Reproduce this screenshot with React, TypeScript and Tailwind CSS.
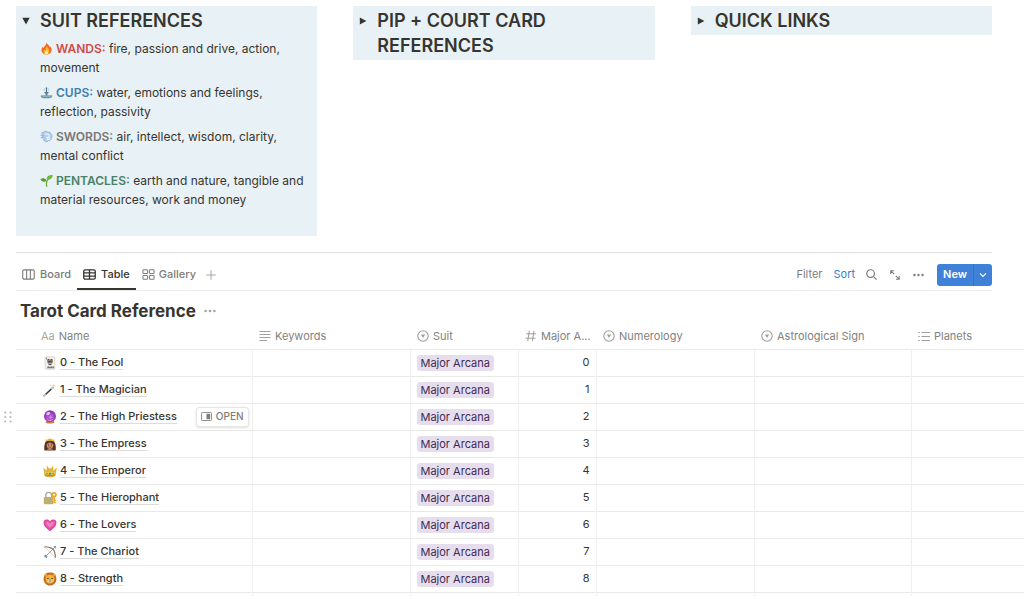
import type { ReactNode } from "react";

type IconProps = { className?: string };

const Fire = () => (
  <svg viewBox="0 0 16 16" className="size-full" aria-hidden="true">
    <path d="M8.2.6c.5 2.2 3.6 4 4.3 6.4.2-.5.3-1.2.1-2 1.5 1.8 2 3.900 1.600 5.900C13.600 13.800 11.200 15.600 8 15.600S2.300 13.700 1.900 10.900c-.3-2.200.5-4.200 1.900-5.500 0 .9.200 1.600.7 2.200C5 4.800 8 3.800 8.200.6z" fill="#f4651f" />
    <path d="M8.300 4.500c.2 1.900 3.300 3.500 3.300 7 0 2.200-1.500 4-3.600 4s-3.700-1.500-3.700-3.700c0-1.300.5-2.300 1.200-3 .1.800.5 1.300 1 1.500C6.300 8 8.200 6.700 8.300 4.500z" fill="#fdb42c" />
    <path d="M8.200 9.500c.3 1.200 1.700 2 1.700 3.700 0 1.300-.8 2.300-1.900 2.300s-2-.9-2-2.100c0-1.600 1.900-2.300 2.200-3.900z" fill="#fff0a0" />
  </svg>
);

const Fountain = () => (
  <svg viewBox="0 0 16 16" className="size-full" aria-hidden="true">
    <path d="M8 1v7M8 2.500C6.500 1.500 5.200 3.500 5 6M8 2.500c1.500-1 2.800 1 3 3.500" fill="none" stroke="#9ccbe4" strokeWidth="1" />
    <path d="M5.300 7.500h5.400c0 1.300-1 1.900-1.900 2.100l.3 2.900H6.900l.3-2.900c-.9-.2-1.900-.8-1.900-2.100z" fill="#5d7a86" />
    <path d="M.8 12h14.400c0 1.800-1.600 3-3.600 3H4.400c-2 0-3.600-1.200-3.600-3z" fill="#78909b" />
    <ellipse cx="8" cy="12" rx="7.200" ry="1.200" fill="#8fbdd0" />
    <path d="M7.300 2h1.400v10H7.300z" fill="#587480" />
  </svg>
);

const Wind = () => (
  <svg viewBox="0 0 16 16" className="size-full" aria-hidden="true">
    <path d="M5 2.500c2-1.500 4-.8 4.600.3 2-.8 4.100.5 4 2.500 1.600 1 1.800 3.200.5 4.500 0 2.200-1.800 3.500-3.600 3.200-1.300 1.800-4 2-5.200.5-1.300-1-1.100-2.800.2-3.500L1 9.500l3-.9L.8 6.200l3.800.6L2 3.500z" fill="#b3cfec" stroke="#84add8" strokeWidth=".9" />
    <path d="M6.500 5.500c2-1.500 4.800-.5 4.800 1.700S8.500 10.500 7.500 9m1 2.500c1.500.7 3.500-.2 3.700-2" fill="none" stroke="#f1f7fd" strokeWidth="1.300" />
  </svg>
);

const Seedling = () => (
  <svg viewBox="0 0 16 16" className="size-full" aria-hidden="true">
    <path d="M8.300 15.200C7.300 11 7.900 8.200 10.300 6" fill="none" stroke="#62a832" strokeWidth="1.400" strokeLinecap="round" />
    <path d="M8.200 5.500c.3-3.300 3.700-4.500 7.500-4.300-.2 4-3.600 6.600-7.100 5.800z" fill="#61b52e" />
    <path d="M.4 6.500c2.700-2 6.200-1.400 7.600 1.700-2.500 2.300-5.600 1.500-7.600-1.700z" fill="#4c9d27" />
    <path d="M9 6c2-.7 3.700-2 5.500-4" stroke="#9bdb58" strokeWidth=".8" fill="none" />
  </svg>
);

const Joker = () => (
  <svg viewBox="0 0 16 16" className="size-full" aria-hidden="true">
    <rect x="2.500" y=".8" width="11" height="14.400" rx="1" fill="#f4f1ea" stroke="#cbc7bf" strokeWidth=".7" />
    <path d="M4.500 5.500l1.200-2.300L8 4.200l2.300-1 1.200 2.300z" fill="#444" />
    <path d="M5.500 5.500h5V9L8 11 5.500 9z" fill="#b9a899" />
    <path d="M5 6h6v1.500H5zM6.500 9h3v1h-3z" fill="#393636" />
    <path d="M4.500 14l1-2.500L8 12.500l2.500-1 1 2.500z" fill="#777" />
    <path d="M3.600 2h.9v2h-.9zM11.600 12h.9v2h-.9z" fill="#555" />
  </svg>
);

const Wand = () => (
  <svg viewBox="0 0 16 16" className="size-full" aria-hidden="true">
    <path d="M1.300 14.700L11.500 5" stroke="#36393b" strokeWidth="1.600" strokeLinecap="round" />
    <path d="M9.800 6.600L11.700 4.800M1.300 14.700l1.500-1.400" stroke="#c9c9c9" strokeWidth="1.700" strokeLinecap="round" />
    <path d="M12.500.8l.5 1.900 1.900.5-1.900.5-.5 1.900-.5-1.900-1.900-.5 1.900-.5zM8.500 1.500l.3 1 1 .3-1 .3-.3 1-.3-1-1-.3 1-.3zM14.500 7l.2.8.8.2-.8.2-.2.8-.2-.8-.8-.2.8-.2z" fill="#f4cf77" />
  </svg>
);

const CrystalBall = () => (
  <svg viewBox="0 0 16 16" className="size-full" aria-hidden="true">
    <path d="M4.200 11.500h7.600l1.200 3c-2 1.300-8 1.300-10 0z" fill="#cf7c3d" />
    <circle cx="8" cy="7" r="6.800" fill="#8a3cae" />
    <circle cx="8" cy="8" r="5" fill="#ae50cf" />
    <path d="M4 10c2 2 6 2 8-.5-1 3.500-6.500 4.200-8 .5z" fill="#e290ee" />
    <ellipse cx="6" cy="4" rx="2.300" ry="1.500" fill="#e7c8f4" transform="rotate(-30 6 4)" />
    <path d="M8.500 5.500l1 2 2 .8-2 .7-1 2-.8-2-2-.7 2-.8z" fill="#d083e3" />
  </svg>
);

const Princess = () => (
  <svg viewBox="0 0 16 16" className="size-full" aria-hidden="true">
    <path d="M1.500 15C.8 8 3 2.500 8 2.500S15.200 8 14.500 15c-2 .6-11 .6-13 0z" fill="#573423" />
    <path d="M3.200 5.200L3 2.500l2.700 1L8 1.200l2.300 2.300 2.700-1-.2 2.700C10 3.900 6 3.900 3.200 5.200z" fill="#efb93b" />
    <path d="M4.100 8c1.400-.3 2.900-1 3.700-2 .8 1 2.500 1.700 4.100 2 .1 3.600-1.400 5.800-3.900 5.800S4 11.600 4.100 8z" fill="#c98c68" />
    <circle cx="6.200" cy="9.200" r=".6" fill="#332119" />
    <circle cx="9.800" cy="9.200" r=".6" fill="#332119" />
    <path d="M6.500 11.300c1 .7 2 .7 3 0" stroke="#8d2f32" strokeWidth=".8" fill="none" />
    <path d="M4 15.200c.7-1.500 7.300-1.500 8 0z" fill="#d6869b" />
  </svg>
);

const Crown = () => (
  <svg viewBox="0 0 16 16" className="size-full" aria-hidden="true">
    <path d="M2.200 13.600L.8 5.200l3.400 3L5 2.600l2.200 4.500L8 4.500l.8 2.600L11 2.600l.8 5.600 3.400-3-1.400 8.400c-2.500 1.300-9 1.300-11.600 0z" fill="#e9b82d" stroke="#c48e19" strokeWidth=".5" />
    <path d="M2.300 10h11.400" stroke="#f8dd73" strokeWidth="1" />
    <path d="M2.500 12.500c3 1.200 8 1.200 11 0" stroke="#a87518" strokeWidth=".9" fill="none" />
    <circle cx="8" cy="11" r="1.300" fill="#3e8ac4" />
    <circle cx="4.500" cy="10.700" r=".9" fill="#55a351" />
    <circle cx="11.500" cy="10.700" r=".9" fill="#55a351" />
    <circle cx="5" cy="2.500" r=".9" fill="#f7d763" />
    <circle cx="11" cy="2.500" r=".9" fill="#f7d763" />
    <circle cx="1" cy="5" r=".8" fill="#f7d763" />
    <circle cx="15" cy="5" r=".8" fill="#f7d763" />
  </svg>
);

const LockKey = () => (
  <svg viewBox="0 0 16 16" className="size-full" aria-hidden="true">
    <path d="M3.200 8V4.800c0-4.200 6.600-4.200 6.600 0V8" fill="none" stroke="#a3a8a9" strokeWidth="1.500" />
    <rect x=".9" y="6.800" width="11" height="8.400" rx="1.200" fill="#c0ae70" />
    <circle cx="12.600" cy="4.200" r="2.100" fill="none" stroke="#eca628" strokeWidth="2" />
    <path d="M12.900 6.500V14" stroke="#eca628" strokeWidth="1.800" />
    <path d="M14.500 10v1.500M14.500 12.500V14" stroke="#eca628" strokeWidth="1.400" />
  </svg>
);

const Heart = () => (
  <svg viewBox="0 0 16 16" className="size-full" aria-hidden="true">
    <path d="M8 15C3.500 11.600.6 8.600.6 5.300.6 1.300 5.800.3 8 4c2.200-3.700 7.400-2.700 7.400 1.300C15.400 8.600 12.500 11.600 8 15z" fill="#e0429f" />
    <path d="M8 12.800C4.500 10.100 2.300 7.700 2.300 5.500 2.300 2.900 6.300 2.500 8 6c1.700-3.500 5.700-3.100 5.700-.5 0 2.200-2.200 4.600-5.700 7.300z" fill="#ec5cae" />
    <path d="M8 10.500C5.500 8.500 4 7 4 5.700 4 4 6.800 4.200 8 7.500c1.200-3.300 4-3.500 4-1.800 0 1.300-1.500 2.800-4 4.800z" fill="#f582c2" />
  </svg>
);

const Bow = () => (
  <svg viewBox="0 0 16 16" className="size-full" aria-hidden="true">
    <path d="M2 2.300c2.500-1 4 .4 6 .8 3 .8 4.800 2.500 5.300 5.400.3 1.700 1.300 3.400.7 5.500" fill="none" stroke="#9b7565" strokeWidth="1.400" strokeLinecap="round" />
    <path d="M2 2.300L14 14" stroke="#b9b5b2" strokeWidth=".6" />
    <path d="M2 14L13.500 2.500" stroke="#8e8c8b" strokeWidth="1" />
    <path d="M15 1l-.8 3.200-2.400-2.400z" fill="#7b8588" />
    <path d="M.7 12.800l2.600-2 .4 1.800 1.700.4-2 2.500-.7-1.900z" fill="#7792a1" />
  </svg>
);

const Lion = () => (
  <svg viewBox="0 0 16 16" className="size-full" aria-hidden="true">
    <path d="M8 .8c3-.5 6 1 6.600 3.700 1.300 3 .9 6.300-1 8.300-1.500 2-3.600 2.600-5.600 2.600s-4.100-.6-5.600-2.600c-1.900-2-2.300-5.300-1-8.300C2 1.800 5 .3 8 .8z" fill="#c76b1d" />
    <circle cx="3.300" cy="3.500" r="1.600" fill="#eba43a" />
    <circle cx="12.700" cy="3.500" r="1.600" fill="#eba43a" />
    <path d="M8 3c3 0 5 2 5 5 0 3.200-2 5.200-5 5.200S3 11.200 3 8c0-3 2-5 5-5z" fill="#f7b940" />
    <circle cx="5.600" cy="7.300" r=".8" fill="#40250f" />
    <circle cx="10.400" cy="7.300" r=".8" fill="#40250f" />
    <ellipse cx="8" cy="10.800" rx="2.800" ry="1.900" fill="#fbe7b5" />
    <path d="M6.900 8.800h2.200L8 10.200z" fill="#542d14" />
    <path d="M6.300 11.200c.7.600 1.400.4 1.700-.3.300.7 1 .9 1.700.3" stroke="#542d14" strokeWidth=".7" fill="none" />
  </svg>
);

const BoardIcon = () => (
  <svg viewBox="0 0 14 14" className="size-[13px]" fill="none" stroke="currentColor" strokeWidth="1.200" aria-hidden="true">
    <rect x=".8" y="2" width="12.400" height="10" rx="1.500" />
    <path d="M5 2v10M9 2v10" />
  </svg>
);

const TableIcon = () => (
  <svg viewBox="0 0 14 14" className="size-[13px]" fill="none" stroke="currentColor" strokeWidth="1.400" aria-hidden="true">
    <rect x=".8" y="2" width="12.400" height="10" rx="1.500" />
    <path d="M.8 5.300h12.400M.8 8.700h12.400M7 2v10" />
  </svg>
);

const GalleryIcon = () => (
  <svg viewBox="0 0 14 14" className="size-[13px]" fill="none" stroke="currentColor" strokeWidth="1.100" aria-hidden="true">
    <rect x="1" y="1.800" width="5" height="4.200" rx=".9" />
    <rect x="8" y="1.800" width="5" height="4.200" rx=".9" />
    <rect x="1" y="8" width="5" height="4.200" rx=".9" />
    <rect x="8" y="8" width="5" height="4.200" rx=".9" />
  </svg>
);

const PlusIcon = () => (
  <svg viewBox="0 0 10 10" className="size-[10px]" stroke="currentColor" aria-hidden="true">
    <path d="M5 .3v9.400M.3 5h9.400" />
  </svg>
);

const Dots = ({ className }: IconProps) => (
  <svg viewBox="0 0 12 4" className={className} fill="currentColor" aria-hidden="true">
    <circle cx="1.600" cy="2" r="1.300" />
    <circle cx="6" cy="2" r="1.300" />
    <circle cx="10.400" cy="2" r="1.300" />
  </svg>
);

const SearchIcon = () => (
  <svg viewBox="0 0 12 12" className="size-[11px]" fill="none" stroke="currentColor" strokeWidth="1.300" aria-hidden="true">
    <circle cx="5" cy="5" r="4.200" />
    <path d="M8 8l3.500 3.500" />
  </svg>
);

const ExpandIcon = () => (
  <svg viewBox="0 0 10 10" className="size-[10px]" fill="none" stroke="currentColor" strokeWidth="1.100" aria-hidden="true">
    <path d="M.8 4V.8H4M.8.8l3.400 3.400M9.200 6v3.200H6M9.200 9.200L5.800 5.800" />
  </svg>
);

const ChevronIcon = () => (
  <svg viewBox="0 0 8 6" className="h-[6px] w-[8px]" fill="none" stroke="currentColor" strokeWidth="1.200" aria-hidden="true">
    <path d="M1 1.300l3 3 3-3" />
  </svg>
);

const TextIcon = () => (
  <svg viewBox="0 0 12 12" className="size-[12px]" stroke="currentColor" aria-hidden="true">
    <path d="M.5 1.500h11M.5 4.500h11M.5 7.500h11M.5 10.500h7.500" />
  </svg>
);

const SelectIcon = () => (
  <svg viewBox="0 0 12 12" className="size-[12px]" aria-hidden="true">
    <circle cx="6" cy="6" r="5.200" fill="none" stroke="currentColor" strokeWidth="1.100" />
    <path d="M3.800 4.600h4.400L6 8.100z" fill="currentColor" />
  </svg>
);

const HashIcon = () => (
  <svg viewBox="0 0 12 12" className="size-[12px]" stroke="currentColor" aria-hidden="true">
    <path d="M4.300.8L2.700 11.200M9 .8L7.400 11.200M1.200 3.800h10M.6 8.200h10" />
  </svg>
);

const ListIcon = () => (
  <svg viewBox="0 0 12 12" className="size-[12px]" stroke="currentColor" aria-hidden="true">
    <path d="M3.500 2.500H12M3.500 6.500H12M3.500 10.500H12M.3 2.500h1.500M.3 6.500h1.500M.3 10.500h1.500" />
  </svg>
);

const PeekIcon = () => (
  <svg viewBox="0 0 12 10" className="h-[9px] w-[11px]" aria-hidden="true">
    <rect x=".5" y=".5" width="11" height="9" rx="1" fill="none" stroke="currentColor" />
    <path d="M6 2h4v6H6z" fill="currentColor" />
  </svg>
);

const GripIcon = () => (
  <svg viewBox="0 0 8 12" className="h-[12px] w-[8px]" fill="currentColor" aria-hidden="true">
    <circle cx="1.300" cy="1.500" r="1.100" />
    <circle cx="6.500" cy="1.500" r="1.100" />
    <circle cx="1.300" cy="6" r="1.100" />
    <circle cx="6.500" cy="6" r="1.100" />
    <circle cx="1.300" cy="10.500" r="1.100" />
    <circle cx="6.500" cy="10.500" r="1.100" />
  </svg>
);

function Toggle({ title, open = false, children }: { title: string; open?: boolean; children?: ReactNode }) {
  return (
    <section className="bg-[#e8f1f6] py-0.5">
      <div className="flex items-start">
        <button type="button" aria-label={`Toggle ${title}`} aria-expanded={open} className="flex h-[25px] w-6 shrink-0 items-center pl-1.5">
          <svg viewBox="0 0 8 8" className="size-[8px]" fill="#37352f" aria-hidden="true">
            {open ? <path d="M.3.800h7.400L4 7.500z" /> : <path d="M.8.500v7L7.400 4z" />}
          </svg>
        </button>
        <h2 className="pr-6 text-[18px] leading-[25px] font-semibold">{title}</h2>
      </div>
      {children}
    </section>
  );
}

const suits = [
  { icon: <Fire />, name: "WANDS:", tone: "text-[#cf4d47]", text: "fire, passion and drive, action, movement" },
  { icon: <Fountain />, name: "CUPS:", tone: "text-[#3f7fae]", text: "water, emotions and feelings, reflection, passivity" },
  { icon: <Wind />, name: "SWORDS:", tone: "text-[#787774]", text: "air, intellect, wisdom, clarity, mental conflict" },
  { icon: <Seedling />, name: "PENTACLES:", tone: "text-[#4a8166]", text: "earth and nature, tangible and material resources, work and money" },
];

const cards = [
  { icon: <Joker />, name: "0 - The Fool" },
  { icon: <Wand />, name: "1 - The Magician" },
  { icon: <CrystalBall />, name: "2 - The High Priestess", active: true },
  { icon: <Princess />, name: "3 - The Empress" },
  { icon: <Crown />, name: "4 - The Emperor" },
  { icon: <LockKey />, name: "5 - The Hierophant" },
  { icon: <Heart />, name: "6 - The Lovers" },
  { icon: <Bow />, name: "7 - The Chariot" },
  { icon: <Lion />, name: "8 - Strength" },
];

const columns = [
  { label: "Name", icon: <span className="text-[#a5a4a1]">Aa</span>, width: "w-[236px]", pad: "pl-[25px]" },
  { label: "Keywords", icon: <TextIcon />, width: "w-[158px]", pad: "pl-[7px]" },
  { label: "Suit", icon: <SelectIcon />, width: "w-[108px]", pad: "pl-[7px]" },
  { label: "Major A...", icon: <HashIcon />, width: "w-[78px]", pad: "pl-[7px]" },
  { label: "Numerology", icon: <SelectIcon />, width: "w-[158px]", pad: "pl-[7px]" },
  { label: "Astrological Sign", icon: <SelectIcon />, width: "w-[157px]", pad: "pl-[7px]" },
  { label: "Planets", icon: <ListIcon />, width: "w-auto", pad: "pl-[7px]" },
];

export default function App() {
  return (
    <main className="bg-white pt-1.5 pl-4 font-['Inter','Noto_Sans',sans-serif] text-[#37352f]">
      <div className="mr-8 grid grid-cols-3 items-start gap-9">
        <Toggle title="SUIT REFERENCES" open>
          <div className="flex flex-col gap-1.5 pt-1.5 pr-1 pb-[25px] pl-6 text-[12px] leading-[19px]">
            {suits.map((s) => (
              <p key={s.name}>
                <span className="mr-[3px] inline-block size-[13px] align-[-2px]">{s.icon}</span>
                <strong className={`font-semibold ${s.tone}`}>{s.name}</strong> {s.text}
              </p>
            ))}
          </div>
        </Toggle>
        <Toggle title="PIP + COURT CARD REFERENCES" />
        <Toggle title="QUICK LINKS" />
      </div>

      <div className="mt-4 mr-8 flex h-[39px] items-stretch justify-between border-t border-b border-t-[#e0e0df] border-b-[#ececeb] pt-[6px] text-[11px] font-medium text-[#7d7c79]">
        <nav className="flex items-stretch">
          <button type="button" className="flex items-center gap-[5px] px-1.5"><BoardIcon />Board</button>
          <button type="button" className="flex items-center gap-[5px] border-b-2 border-[#37352f] px-1.5 pt-0.5 text-[#37352f]"><TableIcon />Table</button>
          <button type="button" className="flex items-center gap-1 px-1.5"><GalleryIcon />Gallery</button>
          <button type="button" aria-label="Add view" className="flex items-center px-1 text-[#a5a4a1]"><PlusIcon /></button>
        </nav>
        <div className="flex items-center gap-[11px] font-normal">
          <button type="button">Filter</button>
          <button type="button" className="text-[#2f7fd0]">Sort</button>
          <button type="button" aria-label="Search"><SearchIcon /></button>
          <button type="button" aria-label="Expand" className="pl-0.5"><ExpandIcon /></button>
          <button type="button" aria-label="More options" className="px-0.5"><Dots className="h-[4px] w-[11px]" /></button>
          <div className="flex h-[22px] overflow-hidden rounded-[3px] bg-[#3f80d8] text-white">
            <button type="button" className="border-r border-[#3672c4] px-1.5 font-semibold">New</button>
            <button type="button" aria-label="New options" className="px-[5px]"><ChevronIcon /></button>
          </div>
        </div>
      </div>

      <div className="flex h-[33px] items-center gap-2 pt-1.5 pl-1">
        <h1 className="text-[17px] leading-6 font-bold">Tarot Card Reference</h1>
        <button type="button" aria-label="Database options" className="text-[#a5a4a1]"><Dots className="h-[4px] w-[12px]" /></button>
      </div>

      <table className="w-full table-fixed border-collapse text-left text-[11px]">
        <thead>
          <tr className="h-[25px] border-b border-[#e9e9e8] text-[#82817e]">
            {columns.map((c) => (
              <th key={c.label} scope="col" className={`${c.width} ${c.pad} py-0 pr-1 font-normal`}>
                <div className="flex items-center gap-1 whitespace-nowrap">
                  <span className="shrink-0 text-[#a09f9c]">{c.icon}</span>
                  <span>{c.label}</span>
                </div>
              </th>
            ))}
          </tr>
        </thead>
        <tbody>
          {cards.map((card, i) => (
            <tr key={card.name} className="h-[27px] border-b border-[#e9e9e8]">
              <td className="relative border-r border-[#efefee] p-0 pr-[3px] pl-[27px]">
                {card.active && (
                  <button type="button" aria-label="Drag row" className="absolute top-1/2 -left-3 -translate-y-1/2 text-[#b9b8b5]"><GripIcon /></button>
                )}
                <div className="flex items-center justify-between">
                  <a href={`#card-${i}`} className="flex items-center gap-[3px] font-medium">
                    <span className="size-[14px] shrink-0">{card.icon}</span>
                    <span className="border-b border-[#dddcda] leading-[14px]">{card.name}</span>
                  </a>
                  {card.active && (
                    <button type="button" className="flex h-5 items-center gap-1 rounded-[3px] border border-[#e6e6e5] bg-white px-1 text-[10px] font-medium text-[#7d7c79] shadow-sm"><PeekIcon />OPEN</button>
                  )}
                </div>
              </td>
              <td className="border-r border-[#efefee] p-0" />
              <td className="border-r border-[#efefee] p-0 pl-1.5">
                <span className="block w-fit rounded-[3px] bg-[#e6deed] px-1 leading-4 text-[#432a52]">Major Arcana</span>
              </td>
              <td className="border-r border-[#efefee] p-0 pr-1.5 text-right">{i}</td>
              <td className="border-r border-[#efefee] p-0" />
              <td className="border-r border-[#efefee] p-0" />
              <td className="p-0" />
            </tr>
          ))}
          <tr className="h-1">
            {columns.map((c) => (
              <td key={c.label} className="border-r border-[#efefee] p-0 last:border-r-0" />
            ))}
          </tr>
        </tbody>
      </table>
    </main>
  );
}
